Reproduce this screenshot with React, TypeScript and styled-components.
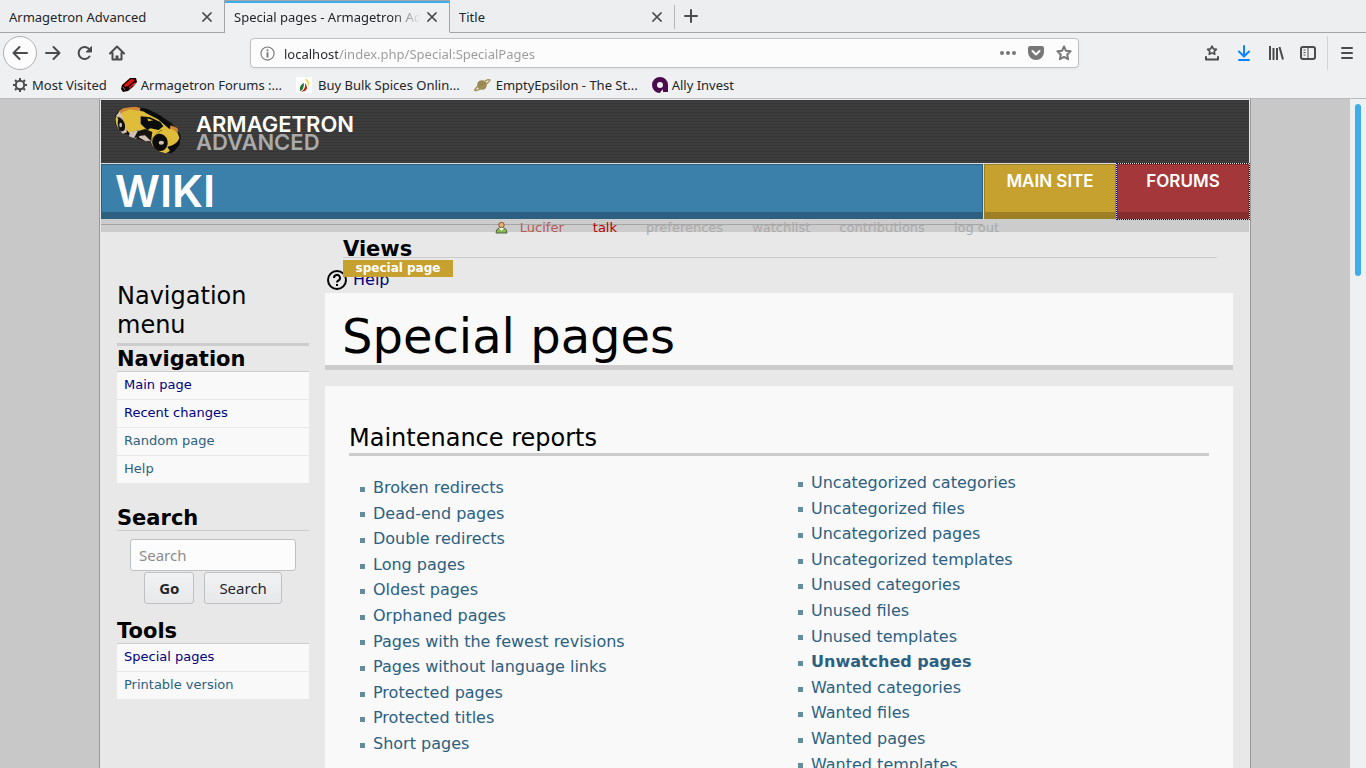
import React from "react";
import styled, { createGlobalStyle, css } from "styled-components";

const GlobalStyle = createGlobalStyle`
  * { box-sizing: border-box; }
  body { margin: 0; background: #c8c8c8; }
  h1, h2, h3, ul, p { margin: 0; padding: 0; font-weight: normal; }
  ul { list-style: none; }
  a { text-decoration: none; }
  button { padding: 0; border: 0; background: none; color: inherit; }
`;

const uiFont = `"Noto Sans", sans-serif`;
const pageFont = `"DejaVu Sans", sans-serif`;
const logoFont = `Inter, "Liberation Sans", sans-serif`;

const Window = styled.div`
  display: flex;
  flex-direction: column;
  height: 100vh;
  overflow: hidden;
`;

/* Browser chrome */

const Chrome = styled.header`
  flex: none;
  background: #eff0f2;
  border-bottom: 1px solid #b9babc;
  font-family: ${uiFont};
  font-size: 13px;
  color: #232629;
`;

const TabStrip = styled.div`
  display: flex;
  height: 33px;
  background: #edeef0;
`;

const Tab = styled.div<{ $active?: boolean; $last?: boolean }>`
  display: flex;
  align-items: center;
  gap: 6px;
  width: 225px;
  padding: 1px 11px 0 9px;
  border-right: 1px solid #a3a4a6;
  border-bottom: 1px solid #a3a4a6;
  ${(p) =>
    p.$active &&
    css`
      background: #eff0f2;
      border-bottom-color: #eff0f2;
      box-shadow: inset 0 1px #a3a4a6, inset 0 3px #3daee9;
    `}
  ${(p) =>
    p.$last &&
    css`
      padding-right: 12px;
      border-right: 0;
      background: linear-gradient(#b4b5b7, #b4b5b7) right 5px / 1px 24px no-repeat;
    `}
`;

const TabTitle = styled.span<{ $fade?: boolean }>`
  flex: 1;
  min-width: 0;
  overflow: hidden;
  white-space: nowrap;
  ${(p) => p.$fade && css`mask-image: linear-gradient(to left, transparent, #000 28px);`}
`;

const IconButton = styled.button`
  display: flex;
  flex: none;
  align-items: center;
  justify-content: center;
`;

const NewTab = styled.div`
  display: flex;
  flex: 1;
  align-items: center;
  padding-left: 8px;
  border-bottom: 1px solid #a3a4a6;
`;

const NavBar = styled.div`
  display: flex;
  align-items: center;
  height: 40px;
  padding: 0 11px 0 3px;
`;

const NavButtons = styled.div`
  display: flex;
  flex: 0 0 247px;
  align-items: center;
  gap: 16px;
`;

const BackButton = styled(IconButton)`
  width: 34px;
  height: 34px;
  margin-right: -8px;
  border: 1px solid #b0b0b0;
  border-radius: 17px;
  background: #fcfcfc;
`;

const UrlBar = styled.div`
  display: flex;
  flex: 1;
  align-items: center;
  gap: 12px;
  height: 30px;
  padding: 0 6px 0 9px;
  border: 1px solid #bfc0c2;
  border-radius: 4px;
  background: #fcfcfc;
  box-shadow: 0 1px 3px #0000000d;
  color: #777;
`;

const UrlInput = styled.input`
  flex: 1;
  min-width: 0;
  height: 28px;
  margin-left: -3px;
  padding: 2px 0 0;
  border: 0;
  outline: 0;
  font: 13px ${uiFont};
  color: #999;
  background: linear-gradient(to right, #232629 54px, #999 54px);
  background-clip: text;
  -webkit-text-fill-color: transparent;
`;

const NavTools = styled.div`
  display: flex;
  align-items: center;
  gap: 16px;
  margin-left: 125px;
`;

const Divider = styled.span`
  width: 1px;
  height: 34px;
  margin: 0 -5px;
  background: #d3d4d6;
`;

const Bookmarks = styled.nav`
  display: flex;
  align-items: center;
  gap: 14px;
  height: 25px;
  padding: 0 12px 2px;
`;

const Bookmark = styled.a`
  display: flex;
  align-items: center;
  gap: 4px;
  color: #232629;
  white-space: nowrap;
`;

/* Wiki page */

const Viewport = styled.div`
  display: flex;
  flex: 1;
  min-height: 0;
`;

const Scroll = styled.div`
  flex: 1;
  min-width: 0;
  overflow: hidden;
  background: #c8c8c8;
  font-family: ${pageFont};
`;

const ScrollTrack = styled.div`
  flex: none;
  width: 16px;
  padding: 5px;
  background: #eff0f1;
`;

const ScrollThumb = styled.div`
  height: 172px;
  border-radius: 3px;
  background: #3daee9;
`;

const Page = styled.div`
  min-height: 100%;
  margin: 0 99px;
  border: solid #999;
  border-width: 0 1px;
  background: #e8e8e8;
`;

const Masthead = styled.div`
  margin: 0 0 0 1px;
  padding: 1px 1px 0 0;
`;

const Brand = styled.a`
  display: flex;
  gap: 8px;
  height: 63px;
  padding-left: 7px;
  background: repeating-linear-gradient(#353535 0 1px, #3d3d3d 1px 3px);
`;

const BrandText = styled.span`
  display: flex;
  flex-direction: column;
  padding-top: 15px;
  font: 600 22px/18px ${logoFont};
  color: #fff;
  span { color: #aaa; }
`;

const SiteNav = styled.nav`
  display: flex;
  gap: 1px;
  padding-top: 1px;
  background: #ddd;
`;

const WikiLink = styled.a`
  flex: 1;
  height: 55px;
  padding-left: 13px;
  border: 1px solid #2c5f80;
  border-bottom-width: 7px;
  background: #3a80ab;
  font: 600 44px/52px ${logoFont};
  color: #fff;
`;

const SiteLink = styled.a<{ $fill: string; $edge: string; $focus?: boolean }>`
  width: 132px;
  height: 55px;
  border: 1px solid ${(p) => p.$edge};
  border-bottom-width: 7px;
  background: ${(p) => p.$fill};
  font: 600 17px/33px ${logoFont};
  text-align: center;
  color: #fff;
  ${(p) => p.$focus && css`outline: 1px dotted #000080;`}
`;

const PersonalBar = styled.ul`
  display: flex;
  justify-content: center;
  gap: 29px;
  height: 13px;
  padding-left: 144px;
  background: linear-gradient(#a5a5a5, #a5a5a5) 0 5px / calc(100% - 266px) 1px no-repeat #ccc;
  font-size: 13px;
  line-height: 18px;
  li { display: flex; align-items: flex-start; gap: 12px; }
  svg { margin-top: 2px; }
`;

const PersonalLink = styled.a<{ $color: string }>`
  color: ${(p) => p.$color};
`;

const Columns = styled.div`
  display: flex;
  gap: 16px;
  padding: 0 17px;
`;

const Sidebar = styled.aside`
  flex: 0 0 192px;
  padding-top: 50px;
`;

const MenuTitle = styled.h2`
  padding-bottom: 3px;
  border-bottom: 3px solid #ccc;
  font-size: 24px;
  line-height: 29px;
`;

const BoxTitle = styled.h3`
  height: 26px;
  border-bottom: 1px solid #ccc;
  font-size: 21px;
  font-weight: bold;
  line-height: 27px;
`;

const SideBox = styled.section<{ $tight?: boolean }>`
  margin-bottom: ${(p) => (p.$tight ? 14 : 21)}px;
`;

const SideItem = styled.li`
  height: 28px;
  padding-left: 7px;
  border-bottom: 1px solid #e8e8e8;
  background: #f9f9f9;
  font-size: 13px;
  line-height: 26px;
`;

const PageLink = styled.a<{ $visited?: boolean; $bold?: boolean }>`
  color: ${(p) => (p.$visited ? "#000080" : "#2c6080")};
  font-weight: ${(p) => (p.$bold ? "bold" : "normal")};
`;

const SearchForm = styled.form`
  display: flex;
  flex-wrap: wrap;
  justify-content: center;
  gap: 1px 10px;
  padding: 8px 13px 0;
`;

const SearchInput = styled.input`
  width: 100%;
  height: 32px;
  padding: 0 8px;
  border: 1px solid #bfc0c2;
  border-radius: 3px;
  background: #fcfcfc;
  font: 15px ${uiFont};
  &::placeholder { color: #8c8d8e; }
`;

const SearchButton = styled.button<{ $bold?: boolean }>`
  height: 32px;
  padding: 0 14px;
  border: 1px solid #bfc0c2;
  border-radius: 3px;
  background: linear-gradient(#f1f2f3, #e6e8ea);
  font: ${(p) => (p.$bold ? "bold" : "normal")} 15px ${uiFont};
  color: #232629;
`;

const Main = styled.main`
  flex: 1;
  min-width: 0;
`;

const Views = styled.section`
  position: relative;
  z-index: 1;
  padding: 0 16px 0 18px;
`;

const ViewsTitle = styled(BoxTitle)`
  padding-top: 4px;
`;

const ViewTab = styled.a`
  display: block;
  width: 110px;
  height: 17px;
  margin-top: 2px;
  background: #c6a12f;
  font-size: 12px;
  font-weight: bold;
  line-height: 16px;
  text-align: center;
  color: #fff;
`;

const HelpRow = styled.div`
  display: flex;
  align-items: center;
  gap: 6px;
  height: 24px;
  margin: -8px 0 0 2px;
  padding-bottom: 4px;
  font-size: 16px;
`;

const HelpIcon = styled.svg`
  margin-top: 2px;
`;

const TitleBox = styled.div`
  padding: 15px 17px 1px;
  border-bottom: 5px solid #ccc;
  background: #f9f9f9;
`;

const Title = styled.h1`
  font-size: 48px;
  line-height: 56px;
`;

const Content = styled.div`
  margin-top: 16px;
  padding: 37px 24px 24px;
  background: #f9f9f9;
`;

const SectionTitle = styled.h2`
  border-bottom: 3px solid #ccc;
  font-size: 24px;
  line-height: 30px;
`;

const Reports = styled.div`
  display: grid;
  grid-template-columns: 1fr 1fr;
  gap: 16px;
  padding-top: 14px;
`;

const ReportList = styled.ul<{ $first?: boolean }>`
  padding: ${(p) => (p.$first ? 5 : 0)}px 0 0 11px;
  font-size: 16px;
  line-height: 1.6;
`;

const Report = styled.li`
  display: flex;
  align-items: center;
  gap: 8px;
  &::before {
    content: "";
    width: 5px;
    height: 5px;
    margin-top: 3px;
    background: #638c9c;
  }
`;

/* Drawings */

const Icon = ({ size = 16, color = "#4a4b4d", children }: { size?: number; color?: string; children: React.ReactNode }) => (
  <svg width={size} height={size} viewBox="0 0 16 16" fill="none" stroke={color} strokeWidth="2" strokeLinecap="round" strokeLinejoin="round" aria-hidden="true">
    {children}
  </svg>
);

const CloseIcon = () => (
  <Icon size={12}><path d="M2.500 2.500l11 11M13.500 2.500l-11 11" /></Icon>
);

const Bike = () => (
  <svg width="80" height="60" viewBox="0 0 240 180" aria-hidden="true">
    <path d="M22 45L23 70 32 88 48 100 110 124 130 118 160 158 190 160 215 135 218 105 208 90 190 68 150 42 115 26 85 20 45 24 32 34z" fill="#15130f" />
    <path d="M32 36L46 25 85 21 98 33 148 42 190 75 200 90 185 91 160 90 140 104 128 124 103 115 91 90 64 99 47 80z" fill="#dfbd3b" />
    <path d="M34 32L48 24 84 20 98 24 94 32 80 31 66 28 45 36 36 42z" fill="#d08735" />
    <path d="M24 47L35 34 45 56 53 78 57 97 44 101 34 88 48 79z" fill="#d1c0b5" />
    <ellipse cx="37" cy="73" rx="13" ry="22" transform="rotate(-22 37 73)" fill="#11110f" />
    <path d="M24 48Q20 67 30 85L34 91Q26 70 31 57z" fill="#dfbd3b" />
    <ellipse cx="38" cy="75" rx="4" ry="7" fill="#d1c0b5" />
    <path d="M98 24L115 27 153 44 192 75 202 86 193 96 184 87 150 58 112 38z" fill="#080c0d" />
    <path d="M188 76L208 84 211 95 198 96 185 86z" fill="#d08735" />
    <path d="M98 49L126 52 157 66 166 79 152 90 127 85 118 91 98 71z" fill="#080c0d" />
    <path d="M118 55l18 6-15 3z" fill="#dfbd3b" />
    <path d="M65 97l24-6 9 2-15 23-20-7z" fill="#d1c0b5" />
    <path d="M92 112l11-20 27 29-17 3z" fill="#d1c0b5" />
    <path d="M89 94l22-7 22 9-4 27-18-17-19 2-15 8z" fill="#15130f" />
    <path d="M129 126Q136 153 174 160L195 147 216 119 209 98 192 87 164 89 139 104z" fill="#dfbd3b" />
    <ellipse cx="156" cy="127" rx="23" ry="26" transform="rotate(-12 156 127)" fill="#0a0b0a" />
    <ellipse cx="160" cy="128" rx="8" ry="6" fill="#d1c0b5" />
    <path d="M190 160Q216 144 218 108L208 125Q196 137 178 140z" fill="#0a0b0a" />
  </svg>
);

const starPath = "M8 1.500l2 4.300 4.600.5-3.400 3.200.9 4.700L8 11.900l-4.100 2.300.9-4.700L1.400 6.300 6 5.800z";

const maintenance = [
  "Broken redirects", "Dead-end pages", "Double redirects", "Long pages", "Oldest pages", "Orphaned pages",
  "Pages with the fewest revisions", "Pages without language links", "Protected pages", "Protected titles", "Short pages",
];
const maintenanceMore = [
  "Uncategorized categories", "Uncategorized files", "Uncategorized pages", "Uncategorized templates", "Unused categories",
  "Unused files", "Unused templates", "Unwatched pages", "Wanted categories", "Wanted files", "Wanted pages", "Wanted templates",
];
const restricted = "Unwatched pages";

const personal = [
  { label: "talk", color: "#ba0000" },
  { label: "preferences", color: "#aaa" },
  { label: "watchlist", color: "#aaa" },
  { label: "contributions", color: "#aaa" },
  { label: "log out", color: "#aaa" },
];

const navigation = [
  { label: "Main page", visited: true },
  { label: "Recent changes", visited: true },
  { label: "Random page" },
  { label: "Help" },
];
const tools = [{ label: "Special pages", visited: true }, { label: "Printable version" }];

const SideLinks = ({ items }: { items: { label: string; visited?: boolean }[] }) => (
  <ul>
    {items.map((i) => (
      <SideItem key={i.label}><PageLink href="#" $visited={i.visited}>{i.label}</PageLink></SideItem>
    ))}
  </ul>
);

const ReportLinks = ({ items, first }: { items: string[]; first?: boolean }) => (
  <ReportList $first={first}>
    {items.map((label) => (
      <Report key={label}><PageLink href="#" $bold={label === restricted}>{label}</PageLink></Report>
    ))}
  </ReportList>
);

const BrowserChrome = () => (
  <Chrome>
    <TabStrip>
      <Tab><TabTitle>Armagetron Advanced</TabTitle><IconButton aria-label="Close tab"><CloseIcon /></IconButton></Tab>
      <Tab $active><TabTitle $fade>Special pages - Armagetron Advanced</TabTitle><IconButton aria-label="Close tab"><CloseIcon /></IconButton></Tab>
      <Tab $last><TabTitle>Title</TabTitle><IconButton aria-label="Close tab"><CloseIcon /></IconButton></Tab>
      <NewTab><IconButton aria-label="New tab"><Icon><path d="M8 2v12M2 8h12" /></Icon></IconButton></NewTab>
    </TabStrip>
    <NavBar>
      <NavButtons>
        <BackButton aria-label="Back"><Icon><path d="M15 8H1.500M7.500 2L1.500 8l6 6" /></Icon></BackButton>
        <IconButton aria-label="Forward"><Icon><path d="M1 8h13.500M8.500 2l6 6-6 6" /></Icon></IconButton>
        <IconButton aria-label="Reload">
          <Icon><path d="M12.500 11.500A6 6 0 1 1 12.500 4.500" /><path d="M14.500 2v5h-5z" fill="#4a4b4d" strokeWidth="1" /></Icon>
        </IconButton>
        <IconButton aria-label="Home">
          <Icon><path d="M1 8.500L8 1.500l7 7M3.500 8v6.500h9V8" /><path d="M8 14v-3.500" strokeWidth="3" strokeLinecap="butt" /></Icon>
        </IconButton>
      </NavButtons>
      <UrlBar>
        <Icon size={15} color="#777"><circle cx="8" cy="8" r="7" strokeWidth="1.200" /><path d="M8 7.500v4M8 4.500v.2" /></Icon>
        <UrlInput aria-label="Address" defaultValue="localhost/index.php/Special:SpecialPages" />
        <IconButton aria-label="Page actions">
          <Icon><g fill="#777" stroke="none"><circle cx="2" cy="8" r="2" /><circle cx="8" cy="8" r="2" /><circle cx="14" cy="8" r="2" /></g></Icon>
        </IconButton>
        <IconButton aria-label="Save to Pocket">
          <Icon><path d="M2 1h12a2 2 0 0 1 2 2v4a8 8 0 0 1-16 0V3a2 2 0 0 1 2-2z" fill="#777" stroke="none" /><path d="M4.500 6L8 9.500 11.500 6" stroke="#fcfcfc" /></Icon>
        </IconButton>
        <IconButton aria-label="Bookmark this page"><Icon color="#777"><path d={starPath} /></Icon></IconButton>
      </UrlBar>
      <NavTools>
        <IconButton aria-label="Show bookmarks">
          <Icon><path d="M8 1l1.400 2.900 3 .4-2.200 2 .6 3L8 7.900 5.200 9.300l.6-3-2.200-2 3-.4z" strokeWidth="1.600" /><path d="M2 12v2.500h12V12" /></Icon>
        </IconButton>
        <IconButton aria-label="Downloads">
          <Icon color="#0a84ff"><path d="M8 1v10M3 6.500l5 5 5-5M3 15h10" /></Icon>
        </IconButton>
        <IconButton aria-label="Library"><Icon><path d="M2 1v14M5.500 3v12M9 3v12M11.500 2L15 14.500" strokeLinecap="butt" /></Icon></IconButton>
        <IconButton aria-label="Sidebars">
          <Icon><rect x="1" y="2" width="14" height="12" rx="2" /><path d="M8 2v12M3.500 5h2M3.500 7.500h2M3.500 10h2" strokeWidth="1" strokeLinecap="butt" /></Icon>
        </IconButton>
        <Divider />
        <IconButton aria-label="Menu"><Icon><path d="M3 3h10M3 8h10M3 13h10" /></Icon></IconButton>
      </NavTools>
    </NavBar>
    <Bookmarks aria-label="Bookmarks">
      <Bookmark href="#">
        <Icon><circle cx="8" cy="8" r="4.200" /><path d="M8 1v2M8 13v2M1 8h2M13 8h2M3 3l1.500 1.500M11.500 11.500L13 13M3 13l1.500-1.500M11.500 4.500L13 3" strokeLinecap="butt" /></Icon>
        Most Visited
      </Bookmark>
      <Bookmark href="#">
        <svg width="16" height="16" viewBox="0 0 16 16" aria-hidden="true">
          <path d="M1 8L9 1h6l1 4-3 4-6 5-5 1-2-3z" fill="#180000" />
          <path d="M3 8l7-6 4 1-7 6-3 1zM8 12l6-5v-2L8 10z" fill="#e01810" />
          <path d="M2 10l2 3M12 9l3-3" stroke="#777" />
        </svg>
        Armagetron Forums :...
      </Bookmark>
      <Bookmark href="#">
        <svg width="18" height="16" viewBox="0 0 18 16" aria-hidden="true">
          <path d="M0 0h16v16H0z" fill="#fff" />
          <path d="M8 6Q3 8 4 14q4-1 4-8z" fill="#1c7430" />
          <path d="M9 6q4 5 0 8l-4 1q5-3 4-9z" fill="#b52718" />
          <path d="M9 2q4 0 4 5l-1 3q0-5-3-8z" fill="#eed32c" />
        </svg>
        Buy Bulk Spices Onlin...
      </Bookmark>
      <Bookmark href="#">
        <svg width="18" height="16" viewBox="0 0 18 16" aria-hidden="true">
          <circle cx="8" cy="8" r="4.800" fill="#968a51" />
          <path d="M4 9Q0 13 1 13.500 4 14 10 9T16 3Q15 2 11 4" fill="none" stroke="#a49259" strokeWidth="1.500" />
        </svg>
        EmptyEpsilon - The St...
      </Bookmark>
      <Bookmark href="#">
        <svg width="16" height="16" viewBox="0 0 16 16" aria-hidden="true">
          <path d="M8 0a8 8 0 0 1 8 8v7h-5v-3a3 3 0 0 1-2 2l-1 2A8 8 0 0 1 8 0z" fill="#4c0a4f" />
          <circle cx="8" cy="8" r="3" fill="#eff0f2" />
        </svg>
        Ally Invest
      </Bookmark>
    </Bookmarks>
  </Chrome>
);

export default function App() {
  return (
    <Window>
      <GlobalStyle />
      <BrowserChrome />
      <Viewport>
        <Scroll>
          <Page>
            <Masthead>
              <Brand href="#">
                <Bike />
                <BrandText>ARMAGETRON<span>ADVANCED</span></BrandText>
              </Brand>
              <SiteNav>
                <WikiLink href="#">WIKI</WikiLink>
                <SiteLink href="#" $fill="#c6a12f" $edge="#9d7f25">MAIN SITE</SiteLink>
                <SiteLink href="#" $fill="#a4373a" $edge="#862d30" $focus>FORUMS</SiteLink>
              </SiteNav>
              <PersonalBar>
                <li>
                  <svg width="13" height="13" viewBox="0 0 13 13" aria-hidden="true">
                    <path d="M1 12q0-4 3-5h5q3 1 3 5z" fill="#84b94c" stroke="#55604a" />
                    <path d="M4 7l2.500 3L9 7z" fill="#fff" />
                    <circle cx="6.500" cy="4" r="2.700" fill="#e6b078" stroke="#8a5a27" />
                  </svg>
                  <PersonalLink href="#" $color="#b55a55">Lucifer</PersonalLink>
                </li>
                {personal.map((p) => (
                  <li key={p.label}><PersonalLink href="#" $color={p.color}>{p.label}</PersonalLink></li>
                ))}
              </PersonalBar>
            </Masthead>
            <Columns>
              <Sidebar>
                <MenuTitle>Navigation menu</MenuTitle>
                <SideBox><BoxTitle>Navigation</BoxTitle><SideLinks items={navigation} /></SideBox>
                <SideBox $tight>
                  <BoxTitle>Search</BoxTitle>
                  <SearchForm onSubmit={(e) => e.preventDefault()}>
                    <SearchInput aria-label="Search" placeholder="Search" />
                    <SearchButton $bold>Go</SearchButton>
                    <SearchButton>Search</SearchButton>
                  </SearchForm>
                </SideBox>
                <SideBox><BoxTitle>Tools</BoxTitle><SideLinks items={tools} /></SideBox>
              </Sidebar>
              <Main>
                <Views>
                  <ViewsTitle>Views</ViewsTitle>
                  <ViewTab href="#">special page</ViewTab>
                </Views>
                <HelpRow>
                  <HelpIcon width="20" height="20" viewBox="0 0 20 20" fill="none" stroke="#000" strokeWidth="2" aria-hidden="true">
                    <circle cx="10" cy="10" r="9" />
                    <path d="M7 8a3 3 0 1 1 4.500 2.500Q10 11.300 10 12.500M10 14v2" />
                  </HelpIcon>
                  <PageLink href="#" $visited>Help</PageLink>
                </HelpRow>
                <TitleBox><Title>Special pages</Title></TitleBox>
                <Content>
                  <SectionTitle>Maintenance reports</SectionTitle>
                  <Reports>
                    <ReportLinks items={maintenance} first />
                    <ReportLinks items={maintenanceMore} />
                  </Reports>
                </Content>
              </Main>
            </Columns>
          </Page>
        </Scroll>
        <ScrollTrack><ScrollThumb /></ScrollTrack>
      </Viewport>
    </Window>
  );
}
